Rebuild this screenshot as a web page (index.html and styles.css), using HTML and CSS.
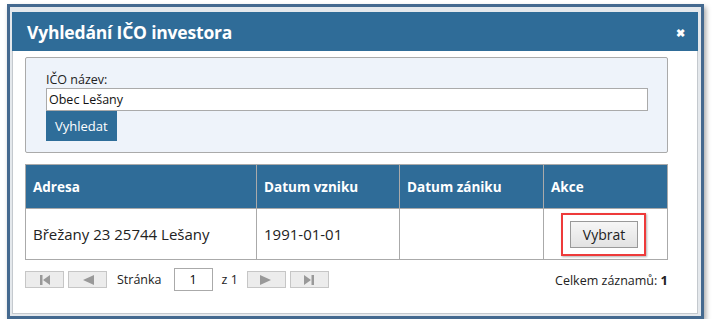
FILE: index.html
```html
<!DOCTYPE html>
<html lang="cs">
<head>
  <meta charset="UTF-8">
  <title>Vyhledání IČO investora</title>
  <link rel="stylesheet" href="styles.css">
</head>
<body>
  <div class="frame">
    <div class="dialog">
      <div class="dialog-header">
        <h2>Vyhledání IČO investora</h2>
        <span class="close">&#10006;</span>
      </div>

      <div class="dialog-body">
        <div class="search-box">
          <label for="ico">IČO název:</label>
          <input type="text" id="ico" value="Obec Lešany">
          <button class="btn-primary">Vyhledat</button>
        </div>

        <table class="results">
          <thead>
            <tr>
              <th class="col-addr">Adresa</th>
              <th class="col-from">Datum vzniku</th>
              <th class="col-to">Datum zániku</th>
              <th>Akce</th>
            </tr>
          </thead>
          <tbody>
            <tr>
              <td>Břežany 23 25744 Lešany</td>
              <td>1991-01-01</td>
              <td></td>
              <td><span class="highlight"><button class="btn-pick">Vybrat</button></span></td>
            </tr>
          </tbody>
        </table>

        <div class="pager">
          <div class="pager-left">
            <button class="pg-btn"><svg width="12" height="12" viewBox="0 0 12 12"><rect x="1" y="1" width="2.5" height="10" fill="#999"/><polygon points="11,1 11,11 4,6" fill="#999"/></svg></button>
            <button class="pg-btn"><svg width="14" height="12" viewBox="0 0 14 12"><polygon points="13,1 13,11 2,6" fill="#999"/></svg></button>
            <span class="pg-label">Stránka</span>
            <input type="text" class="pg-input" value="1">
            <span class="pg-of">z 1</span>
            <button class="pg-btn"><svg width="14" height="12" viewBox="0 0 14 12"><polygon points="1,1 1,11 12,6" fill="#999"/></svg></button>
            <button class="pg-btn"><svg width="12" height="12" viewBox="0 0 12 12"><polygon points="1,1 1,11 8,6" fill="#999"/><rect x="8.5" y="1" width="2.5" height="10" fill="#999"/></svg></button>
          </div>
          <div class="total">Celkem záznamů: <strong>1</strong></div>
        </div>
      </div>
    </div>
  </div>
</body>
</html>
```

FILE: styles.css
```css
body {
  margin: 0;
  padding: 4px 0 0 7px;
  font-family: 'Open Sans', 'Noto Sans', sans-serif;
  color: #222;
  background: #fff;
}

.frame {
  width: 697px;
  height: 315px;
  box-sizing: border-box;
  border: 3px solid #44698f;
  padding: 5px 3px 2px 2px;
  background: #e4e8ec;
  box-shadow: 2px 3px 5px rgba(0, 0, 0, 0.35);
}

.dialog {
  height: 100%;
  background: #fff;
  border: 1px solid #c4c9ce;
  box-sizing: border-box;
}

.dialog-header {
  height: 39px;
  background-color: #2f6c98;
  display: flex;
  align-items: center;
  justify-content: space-between;
  padding: 0 13px 0 15px;
  margin: -1px -1px 0 -1px;
  color: #fff;
}

.dialog-header h2 {
  margin: 0;
  font-size: 17.5px;
  font-weight: 700;
  letter-spacing: -0.2px;
}

.close {
  font-size: 11px;
  font-weight: bold;
  margin-top: 2px;
}

.dialog-body {
  padding: 6px 29px 0 12px;
}

.search-box {
  background-color: #eef3fa;
  border: 1px solid #aaa;
  border-radius: 2px;
  padding: 13px 19px 11px 20px;
  display: flex;
  flex-direction: column;
  align-items: flex-start;
}

.search-box label {
  font-size: 12.5px;
  line-height: 17px;
}

.search-box input {
  width: 100%;
  box-sizing: border-box;
  height: 23px;
  border: 1px solid #aaa;
  padding: 0 2px;
  font-family: inherit;
  font-size: 12.5px;
  color: #111;
  outline: none;
}

.btn-primary {
  background-color: #2e6d99;
  color: #fff;
  border: none;
  height: 30px;
  padding: 0 9px;
  font-family: inherit;
  font-size: 13px;
  cursor: pointer;
}

.results {
  width: 100%;
  margin-top: 11px;
  border-collapse: collapse;
  border: 1px solid #aaa;
}

.results th {
  background-color: #2f6c98;
  color: #fff;
  text-align: left;
  font-size: 13.5px;
  font-weight: 700;
  height: 43px;
  padding: 0 7px;
  border: 1px solid #aaa;
}

.results td {
  font-size: 15px;
  height: 50px;
  padding: 0 7px;
  border: 1px solid #aaa;
  color: #222;
}

.col-addr { width: 216px; }
.col-from { width: 128px; }
.col-to { width: 129px; }

.highlight {
  display: inline-block;
  border: 2px solid #ee3b3b;
  padding: 6px 6px 6px 7px;
  margin-left: 10px;
  box-shadow: 1px 1px 2px rgba(0, 0, 0, 0.3);
  vertical-align: middle;
}

.btn-pick {
  display: block;
  background: linear-gradient(#f6f6f6, #e2e2e2);
  border: 1px solid #999;
  height: 27px;
  width: 68px;
  font-family: inherit;
  font-size: 14px;
  color: #222;
  padding: 0;
}

.pager {
  display: flex;
  justify-content: space-between;
  align-items: center;
  margin-top: 8px;
}

.pager-left {
  display: flex;
  align-items: center;
}

.pg-btn {
  width: 39px;
  height: 17px;
  background: #ececec;
  border: 1px solid #c6c6c6;
  margin-right: 4px;
  padding: 0;
  display: flex;
  align-items: center;
  justify-content: center;
}

.pg-label {
  font-size: 12.5px;
  margin: 0 12px 0 6px;
}

.pg-input {
  width: 39px;
  height: 23px;
  box-sizing: border-box;
  border: 1px solid #aaa;
  text-align: center;
  font-family: inherit;
  font-size: 12.5px;
  padding: 0;
}

.pg-of {
  font-size: 12.5px;
  margin: 0 9px 0 9px;
}

.total {
  font-size: 12.5px;
}

.total strong {
  font-size: 13px;
}
```
